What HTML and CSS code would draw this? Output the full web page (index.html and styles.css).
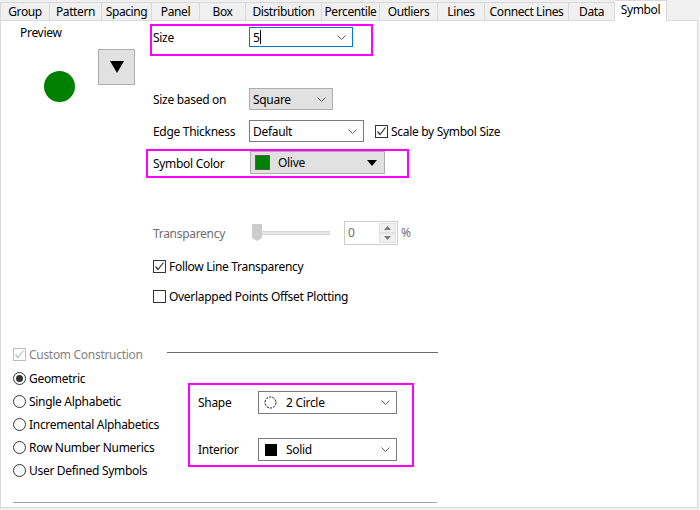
FILE: index.html
```html
<!DOCTYPE html>
<html>
<head>
<meta charset="utf-8">
<link rel="stylesheet" href="styles.css">
</head>
<body>
<div class="tabs">
  <div class="tab">Group</div>
  <div class="tab">Pattern</div>
  <div class="tab">Spacing</div>
  <div class="tab">Panel</div>
  <div class="tab">Box</div>
  <div class="tab">Distribution</div>
  <div class="tab">Percentile</div>
  <div class="tab">Outliers</div>
  <div class="tab">Lines</div>
  <div class="tab">Connect Lines</div>
  <div class="tab">Data</div>
  <div class="tab active">Symbol</div>
</div>
<div class="panel">
  <div class="top">
    <div class="preview">
      <div class="preview-label">Preview</div>
      <div class="preview-row">
        <div class="dot"></div>
        <div class="sym-btn"><svg width="14" height="12" viewBox="0 0 14 12"><polygon points="0,0 14,0 7,12" fill="#000"/></svg></div>
      </div>
    </div>
    <div class="form">
      <div class="hl hl-size">
        <span class="lbl">Size</span>
        <div class="combo edit w-size"><span class="val">5</span><span class="caret"></span><span class="spacer"></span><svg class="chev" width="9" height="5" viewBox="0 0 9 5"><polyline points="0.5,0.5 4.5,4.5 8.5,0.5" fill="none" stroke="#606060"/></svg></div>
      </div>
      <div class="row r-based">
        <span class="lbl">Size based on</span>
        <div class="combo gray w-based"><span class="val">Square</span><span class="spacer"></span><svg class="chev" width="9" height="5" viewBox="0 0 9 5"><polyline points="0.5,0.5 4.5,4.5 8.5,0.5" fill="none" stroke="#606060"/></svg></div>
      </div>
      <div class="row r-edge">
        <span class="lbl">Edge Thickness</span>
        <div class="combo w-edge"><span class="val">Default</span><span class="spacer"></span><svg class="chev" width="9" height="5" viewBox="0 0 9 5"><polyline points="0.5,0.5 4.5,4.5 8.5,0.5" fill="none" stroke="#606060"/></svg></div>
        <span class="check checked"><svg width="11" height="11" viewBox="0 0 11 11"><polyline points="1.5,5.5 4,8.5 9.5,1.5" fill="none" stroke="#333" stroke-width="1.2"/></svg></span>
        <span class="check-text">Scale by Symbol Size</span>
      </div>
      <div class="hl hl-color">
        <span class="lbl">Symbol Color</span>
        <div class="combo gray w-color"><span class="swatch"></span><span class="val olive">Olive</span><span class="spacer"></span><svg width="10" height="6" viewBox="0 0 10 6"><polygon points="0,0 10,0 5,6" fill="#000"/></svg></div>
      </div>
      <div class="row r-trans">
        <span class="lbl disabled">Transparency</span>
        <div class="slider">
          <svg width="80" height="18" viewBox="0 0 80 18">
            <rect x="9.5" y="7.5" width="68" height="3" fill="#e7e7e7" stroke="#d6d6d6"/>
            <polygon points="0,0 10,0 10,14 5,17 0,14" fill="#cccccc"/>
          </svg>
        </div>
        <div class="spin">
          <span class="spin-val">0</span>
          <span class="spacer"></span>
          <div class="spin-btns">
            <div class="sb"><svg width="7" height="4" viewBox="0 0 7 4"><polygon points="0,4 7,4 3.5,0" fill="#7a7a7a"/></svg></div>
            <div class="sb"><svg width="7" height="4" viewBox="0 0 7 4"><polygon points="0,0 7,0 3.5,4" fill="#7a7a7a"/></svg></div>
          </div>
        </div>
        <span class="pct disabled">%</span>
      </div>
      <div class="row r-follow">
        <span class="check checked"><svg width="11" height="11" viewBox="0 0 11 11"><polyline points="1.5,5.5 4,8.5 9.5,1.5" fill="none" stroke="#333" stroke-width="1.2"/></svg></span>
        <span class="check-text">Follow Line Transparency</span>
      </div>
      <div class="row r-overlap">
        <span class="check"></span>
        <span class="check-text">Overlapped Points Offset Plotting</span>
      </div>
    </div>
  </div>
  <div class="bottom">
    <div class="cc-row">
      <span class="check dis"><svg width="11" height="11" viewBox="0 0 11 11"><polyline points="1.5,5.5 4,8.5 9.5,1.5" fill="none" stroke="#bcbcbc" stroke-width="1.2"/></svg></span>
      <span class="check-text disabled2">Custom Construction</span>
      <span class="sep"></span>
    </div>
    <div class="bottom-main">
      <div class="radios">
        <div class="radio-row"><span class="radio on"></span><span class="check-text">Geometric</span></div>
        <div class="radio-row"><span class="radio"></span><span class="check-text">Single Alphabetic</span></div>
        <div class="radio-row"><span class="radio"></span><span class="check-text">Incremental Alphabetics</span></div>
        <div class="radio-row"><span class="radio"></span><span class="check-text">Row Number Numerics</span></div>
        <div class="radio-row last"><span class="radio"></span><span class="check-text">User Defined Symbols</span></div>
      </div>
      <div class="hl hl-shape">
        <div class="shape-row">
          <span class="lbl2">Shape</span>
          <div class="combo w-shape"><svg class="ico" width="13" height="13" viewBox="0 0 13 13"><circle cx="6.5" cy="6.5" r="5.5" fill="none" stroke="#000" stroke-dasharray="2.2 1.2"/></svg><span class="val">2 Circle</span><span class="spacer"></span><svg class="chev" width="9" height="5" viewBox="0 0 9 5"><polyline points="0.5,0.5 4.5,4.5 8.5,0.5" fill="none" stroke="#606060"/></svg></div>
        </div>
        <div class="shape-row second">
          <span class="lbl2">Interior</span>
          <div class="combo w-shape"><span class="sq"></span><span class="val">Solid</span><span class="spacer"></span><svg class="chev" width="9" height="5" viewBox="0 0 9 5"><polyline points="0.5,0.5 4.5,4.5 8.5,0.5" fill="none" stroke="#606060"/></svg></div>
        </div>
      </div>
    </div>
    <div class="bottom-line"></div>
  </div>
</div>
</body>
</html>
```
FILE: styles.css
```css
* { box-sizing: border-box; }
html, body { margin: 0; padding: 0; }
body {
  width: 700px;
  height: 510px;
  background: #f0f0f0;
  font-family: "Noto Sans", "Open Sans", sans-serif;
  font-size: 12px;
  letter-spacing: -0.3px;
  line-height: 16px;
  color: #000;
  overflow: hidden;
}
.tabs {
  display: flex;
  height: 20px;
  position: relative;
  z-index: 1;
}
.tab {
  margin-top: 2px;
  height: 18px;
  border: 1px solid #d9d9d9;
  border-bottom: none;
  border-right: none;
  background: #f0f0f0;
  text-align: center;
  line-height: 18px;
  white-space: nowrap;
  letter-spacing: -0.4px;
  overflow: hidden;
}
.tab:nth-child(1) { width: 49px; }
.tab:nth-child(2) { width: 52px; }
.tab:nth-child(3) { width: 50px; }
.tab:nth-child(4) { width: 48px; }
.tab:nth-child(5) { width: 46px; }
.tab:nth-child(6) { width: 76px; }
.tab:nth-child(7) { width: 58px; }
.tab:nth-child(8) { width: 58px; }
.tab:nth-child(9) { width: 47px; }
.tab:nth-child(10) { width: 84px; }
.tab:nth-child(11) { width: 47px; border-right: 1px solid #d9d9d9; }
.tab.active {
  width: 52px;
  margin-top: 0;
  height: 21px;
  background: #fff;
  border-right: 1px solid #d9d9d9;
  border-left: none;
  line-height: 18px;
}
.panel {
  width: 698px;
  height: 488px;
  background: #fff;
  border: 1px solid #d9d9d9;
}
.top { display: flex; }
.preview { width: 145px; padding-top: 4px; padding-left: 19px; }
.preview-row { display: flex; align-items: flex-start; margin-top: 8px; }
.dot {
  width: 31px; height: 31px; border-radius: 50%;
  background: #008000;
  margin-left: 24px; margin-top: 22px;
}
.sym-btn {
  width: 37px; height: 36px;
  margin-left: 23px;
  background: #e1e1e1;
  border: 1px solid #adadad;
  display: flex; align-items: center; justify-content: center;
}
.form { display: flex; flex-direction: column; align-items: flex-start; }
.hl { border: 2px solid #ff00ff; }
.hl-size {
  margin-top: 3px; margin-left: 4px;
  width: 223px; height: 32px;
  display: flex; align-items: flex-start;
  padding-top: 1px;
}
.hl-size .lbl { width: 97px; padding-left: 1px; line-height: 21px; }
.row { display: flex; align-items: center; margin-left: 7px; }
.row .lbl { width: 96px; padding-top: 1px; }
.r-based { margin-top: 32px; height: 22px; }
.r-edge { margin-top: 10px; height: 22px; }
.r-trans { margin-top: 43px; height: 24px; }
.r-follow { margin-top: 13px; height: 16px; }
.r-overlap { margin-top: 14px; height: 16px; }
.hl-color {
  margin-top: 7px;
  width: 263px; height: 29px;
  display: flex; align-items: flex-start;
}
.hl-color .lbl { width: 102px; padding-left: 5px; line-height: 25px; }
.combo {
  display: flex; align-items: center;
  border: 1px solid #7a7a7a;
  background: #fff;
  padding-left: 3px; padding-right: 6px;
}
.combo .val { padding-top: 1px; }
.combo .spacer, .spin .spacer { flex: 1; }
.combo.gray { background: #e1e1e1; border-color: #adadad; }
.combo.edit { border-color: #0078d7; }
.w-size { width: 104px; height: 20px; }
.w-based { width: 84px; height: 22px; }
.w-edge { width: 115px; height: 22px; }
.w-color { width: 135px; height: 23px; padding-left: 4px; padding-right: 7px; }
.w-shape { width: 139px; height: 23px; padding-left: 4px; padding-right: 6px; }
.caret { width: 1px; height: 14px; background: #000; }
.swatch { width: 15px; height: 15px; background: #008000; border: 1px solid #5a5a5a; }
.val.olive { margin-left: 8px; }
.check {
  width: 13px; height: 13px;
  border: 1px solid #333;
  background: #fff;
  display: inline-flex; align-items: center; justify-content: center;
  flex: none;
}
.check.dis { border-color: #bcbcbc; }
.check-text { margin-left: 3px; white-space: nowrap; padding-top: 1px; }
.r-edge .check { margin-left: 11px; }
.disabled { color: #6d6d6d; }
.disabled2 { color: #838383; }
.slider { margin-left: 3px; height: 18px; }
.spin {
  margin-left: 12px;
  width: 54px; height: 24px;
  border: 1px solid #cccccc;
  display: flex; align-items: center;
  padding: 1px 1px 1px 3px;
  color: #6d6d6d;
}
.spin-btns { display: flex; flex-direction: column; width: 17px; height: 20px; }
.sb {
  flex: 1;
  background: #f0f0f0;
  border: 1px solid #e0e0e0;
  display: flex; align-items: center; justify-content: center;
}
.pct { margin-left: 3px; }
.bottom { padding-left: 12px; margin-top: 42px; }
.cc-row { display: flex; align-items: center; height: 16px; width: 425px; }
.sep { width: 271px; height: 1px; background: #6b6b6b; margin-left: auto; margin-top: -4px; }
.bottom-main { display: flex; align-items: flex-start; margin-top: 8px; }
.radios { width: 175px; display: flex; flex-direction: column; gap: 7px; }
.radio-row { display: flex; align-items: center; height: 16px; }
.radio {
  width: 13px; height: 13px; border-radius: 50%;
  border: 1px solid #333; background: #fff;
  display: inline-flex; align-items: center; justify-content: center;
}
.radio.on::after { content: ""; width: 7px; height: 7px; border-radius: 50%; background: #333; }
.hl-shape {
  margin-top: 13px;
  width: 226px; height: 84px;
  padding: 6px 15px 0 8px;
}
.shape-row { display: flex; align-items: center; }
.shape-row.second { margin-top: 24px; }
.lbl2 { width: 60px; padding-top: 1px; }
.ico { margin-left: 1px; margin-right: 9px; }
.sq { width: 12px; height: 12px; background: #000; margin-left: 2px; margin-right: 9px; }
.bottom-line { width: 424px; height: 1px; background: #a0a0a0; margin-top: 24px; }
```
